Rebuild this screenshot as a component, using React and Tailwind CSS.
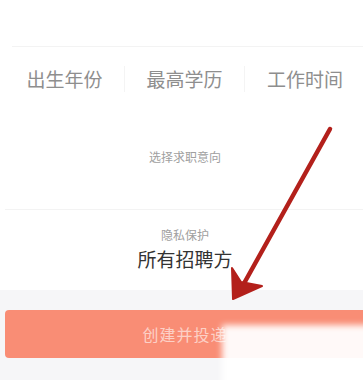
import React from 'react';

const font = { fontFamily: '"Noto Sans CJK SC", "Noto Sans", sans-serif' };

const Arrow = () => (
    <svg className="absolute left-0 top-0 pointer-events-none" width="363" height="380" viewBox="0 0 363 380">
        <line x1="330" y1="129" x2="242" y2="287" stroke="#b3201b" strokeWidth="4.5" strokeLinecap="round" />
        <path d="M233 299 L232 268 L241 282 L262 286 Z" fill="#b3201b" stroke="#b3201b" strokeWidth="2" strokeLinejoin="round" />
    </svg>
);

const App = () => {
    return (
        <div className="relative w-[363px] h-[380px] overflow-hidden bg-white" style={font}>
            {/* Top field */}
            <div className="h-[47px] ml-[12px] border-b border-[#f3f3f3]"></div>

            <div className="ml-[5px] w-[360px]">
                {/* Three selectors */}
                <div className="grid grid-cols-3 h-[64px] items-center">
                    <div className="flex items-center">
                        <span className="flex-1 text-center text-[19px] text-[#8e8e8e] leading-[28px]">出生年份</span>
                        <span className="w-px h-[26px] bg-[#f4f4f4]"></span>
                    </div>
                    <div className="flex items-center">
                        <span className="flex-1 text-center text-[19px] text-[#8e8e8e] leading-[28px]">最高学历</span>
                        <span className="w-px h-[26px] bg-[#f4f4f4]"></span>
                    </div>
                    <div className="text-center text-[19px] text-[#8e8e8e] leading-[28px]">工作时间</div>
                </div>

                {/* Job intent */}
                <div className="h-[99px] flex items-center justify-center border-b border-[#f3f3f3]">
                    <span className="text-[12px] text-[#a0a0a0] -mt-[7px]">选择求职意向</span>
                </div>

                {/* Privacy */}
                <div className="h-[80px] flex flex-col items-center pt-[17px]">
                    <span className="text-[12px] text-[#a0a0a0] leading-[16px]">隐私保护</span>
                    <span className="text-[19px] text-[#333333] leading-[28px] mt-[2px]">所有招聘方</span>
                </div>
            </div>

            {/* Bottom bar */}
            <div className="absolute left-0 right-0 top-[290px] bottom-0 bg-[#f6f6f8]">
                <div className="ml-[5px] mt-[20px] w-[370px] h-[48px] rounded-[4px] bg-[#f98d75] flex items-center">
                    <span className="w-[360px] text-center text-[16px] text-white/60 tracking-[1px]">创建并投递</span>
                </div>
            </div>

            {/* Watermark */}
            <div className="absolute left-[222px] top-[325px] w-[160px] h-[70px] bg-white/95 blur-[3px]"></div>

            <Arrow />
        </div>
    );
};

export default App;
